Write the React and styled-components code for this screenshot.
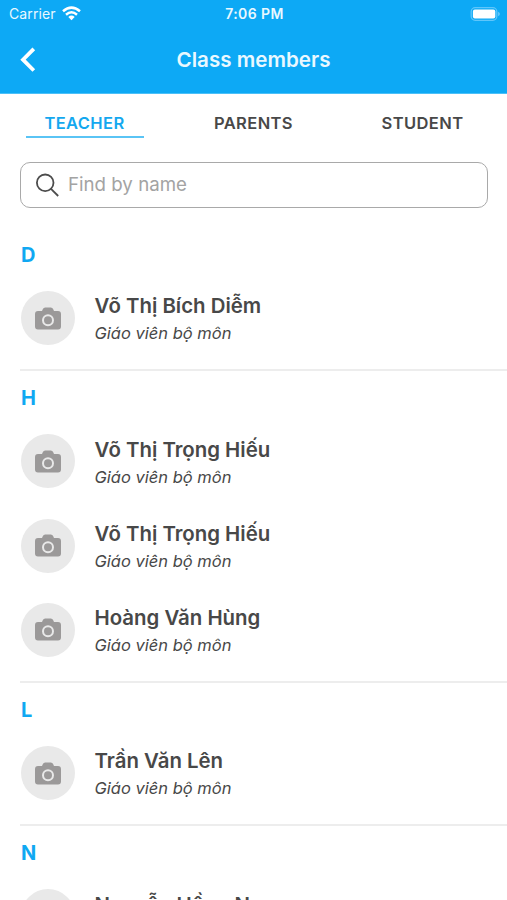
import React from "react"
import styled, { createGlobalStyle } from "styled-components"

const sections = [
  { letter: "D", members: ["Võ Thị Bích Diễm"] },
  {
    letter: "H",
    members: ["Võ Thị Trọng Hiếu", "Võ Thị Trọng Hiếu", "Hoàng Văn Hùng"],
  },
  { letter: "L", members: ["Trần Văn Lên"] },
  { letter: "N", members: ["Nguyễn Hồng Nga"] },
]

const tabs = ["TEACHER", "PARENTS", "STUDENT"]

const CameraIcon = () => (
  <svg width="26" height="23" viewBox="0 0 26 23">
    <path
      fill="#9b9999"
      d="M3 4h4l.9-2Q8.600.5 10.200.5h5.600q1.600 0 2.300 1.500L19 4h4q3 0 3 3v12.500q0 3-3 3H3q-3 0-3-3V7q0-3 3-3z"
    />
    <circle cx="13" cy="13.300" r="5" fill="none" stroke="#e9e9e9" strokeWidth="2" />
  </svg>
)

const App = () => {
  return (
    <Screen>
      <GlobalStyle />
      <StatusBar>
        <Carrier>
          Carrier
          <svg width="19" height="15" viewBox="0 0 19 15">
            <g fill="none" stroke="#fff" strokeWidth="2.500">
              <path d="M1 5.300Q9.500-2.100 18 5.300" />
              <path d="M4 8.700Q9.500 3.900 15 8.700" />
            </g>
            <path fill="#fff" d="M6.300 11Q9.500 8.200 12.700 11L9.500 14.300z" />
          </svg>
        </Carrier>
        <Time>7:06 PM</Time>
        <Battery>
          <svg width="30" height="14" viewBox="0 0 30 14">
            <rect x="1.200" y=".7" width="25.600" height="12.600" rx="4" fill="none" stroke="#5fc6fb" strokeWidth="1.300" />
            <rect x="2.900" y="2.600" width="22.400" height="8.800" rx="2" fill="#fff" />
            <path fill="#5fc6fb" d="M28 4.700q2 .7 2 2.300t-2 2.300z" />
          </svg>
        </Battery>
      </StatusBar>
      <NavBar>
        <BackButton aria-label="Back">
          <svg width="16" height="26" viewBox="0 0 16 26">
            <path
              d="M13.800 1.900L3 12.700l10.800 10.800"
              fill="none"
              stroke="#fff"
              strokeWidth="3.800"
            />
          </svg>
        </BackButton>
        <Title>Class members</Title>
      </NavBar>
      <Tabs>
        {tabs.map((tab, i) => (
          <Tab key={tab} $active={i === 0}>
            {tab}
          </Tab>
        ))}
      </Tabs>
      <SearchBox>
        <svg width="24" height="24" viewBox="0 0 24 24">
          <g fill="none" stroke="#4c4c4c" strokeWidth="1.800">
            <circle cx="10.200" cy="9.800" r="8.300" />
            <path d="M16 15.800l7.200 7.200" />
          </g>
        </svg>
        <SearchInput placeholder="Find by name" />
      </SearchBox>
      {sections.map(section => (
        <Section key={section.letter}>
          <Letter>{section.letter}</Letter>
          {section.members.map((name, i) => (
            <Member key={i}>
              <Avatar>
                <CameraIcon />
              </Avatar>
              <Info>
                <Name>{name}</Name>
                <Role>Giáo viên bộ môn</Role>
              </Info>
            </Member>
          ))}
        </Section>
      ))}
    </Screen>
  )
}

export default App

const GlobalStyle = createGlobalStyle`
  * {
    box-sizing: border-box;
  }
  body {
    margin: 0;
    background: #fff;
    font-family: Inter, sans-serif;
  }
`

const Screen = styled.div`
  height: 900px;
  overflow: hidden;
  background: #fff;
  color: #484848;
`

const StatusBar = styled.div`
  display: grid;
  grid-template-columns: 1fr auto 1fr;
  align-items: center;
  height: 27px;
  padding: 0 7px 0 9px;
  background: #0da9f5;
  color: #e9f8ff;
`

const Carrier = styled.div`
  display: flex;
  align-items: center;
  gap: 6px;
  font-size: 14px;
  letter-spacing: 0.100px;
`

const Time = styled.div`
  font-size: 14px;
  font-weight: 600;
  letter-spacing: 0.400px;
`

const Battery = styled.div`
  display: flex;
  justify-content: flex-end;
`

const NavBar = styled.header`
  display: grid;
  grid-template-columns: 1fr auto 1fr;
  align-items: center;
  height: 67px;
  padding: 0 20px;
  background: #0da9f5;
  border-bottom: 1px solid #4bc0f8;
`

const BackButton = styled.button`
  display: flex;
  padding: 0;
  border: none;
  background: none;
`

const Title = styled.h1`
  margin: 0;
  padding-bottom: 2px;
  font-size: 20.600px;
  font-weight: 600;
  color: #e9f8ff;
`

const Tabs = styled.nav`
  display: grid;
  grid-template-columns: repeat(3, 1fr);
  justify-items: center;
  height: 68px;
  padding-top: 16px;
`

const Tab = styled.div`
  width: 118px;
  height: 28px;
  line-height: 27px;
  text-align: center;
  font-size: 16.500px;
  font-weight: 600;
  letter-spacing: 0.400px;
  color: ${props => (props.$active ? "#14a8ef" : "#484848")};
  border-bottom: 2px solid ${props => (props.$active ? "#5ac4f5" : "transparent")};
`

const SearchBox = styled.label`
  display: flex;
  align-items: center;
  gap: 9px;
  height: 46px;
  margin: 0 19px 19.500px 20px;
  padding: 0 14px;
  border: 1.500px solid #a9a9a9;
  border-radius: 10px;
`

const SearchInput = styled.input`
  flex: 1;
  padding: 0 0 2px;
  border: none;
  outline: none;
  font-family: inherit;
  font-size: 18.700px;
  color: #484848;
  &::placeholder {
    color: #a3a3a3;
    opacity: 1;
  }
`

const Section = styled.section`
  margin-left: 20px;
  padding-bottom: 8.600px;
  border-bottom: 2px solid #ededed;
`

const Letter = styled.h2`
  height: 48.400px;
  margin: 0;
  padding-left: 1px;
  line-height: 55px;
  font-size: 20px;
  font-weight: 700;
  color: #10a8f2;
`

const Member = styled.div`
  display: flex;
  align-items: center;
  gap: 20px;
  height: 84.300px;
  padding-left: 0.500px;
`

const Avatar = styled.div`
  display: flex;
  align-items: center;
  justify-content: center;
  width: 54px;
  height: 54px;
  border-radius: 50%;
  background: #e9e9e9;
`

const Info = styled.div`
  padding-top: 2.400px;
`

const Name = styled.div`
  line-height: 28px;
  font-size: 20.400px;
  font-weight: 600;
`

const Role = styled.div`
  line-height: 26px;
  font-size: 16.500px;
  font-style: italic;
`
